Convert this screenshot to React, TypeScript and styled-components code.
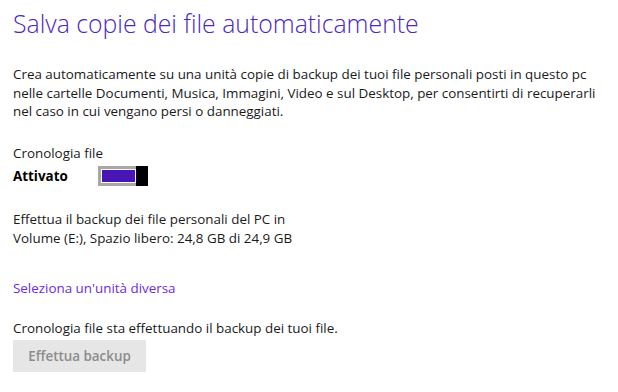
import React from "react";
import styled, { createGlobalStyle } from "styled-components";

const Global = createGlobalStyle`
  html, body { margin: 0; padding: 0; background: #ffffff; }
  body { font-family: "Open Sans", "Noto Sans", sans-serif; color: #000; }
`;

const Page = styled.main`
  width: 618px;
  height: 392px;
  box-sizing: border-box;
  padding: 7px 0 0 13px;
  overflow: hidden;
  background: #fff;
`;

const Title = styled.h1`
  margin: 0;
  font-family: "Open Sans", sans-serif;
  font-weight: 300;
  font-size: 24.8px;
  line-height: 32px;
  color: #4b28c0;
`;

const Text = styled.p<{ $mt?: number }>`
  margin: ${(p) => p.$mt ?? 0}px 0 0 0;
  font-size: 13.4px;
  line-height: 18.5px;
  color: #1a1a1a;
`;

const ToggleRow = styled.div`
  display: flex;
  align-items: center;
  margin-top: 2px;
  height: 24px;
`;

const ToggleLabel = styled.span`
  font-weight: 700;
  font-size: 13.4px;
  width: 85px;
`;

const Switch = styled.div`
  display: flex;
  height: 20px;
`;

const Track = styled.div`
  width: 38px;
  box-sizing: border-box;
  border: 3px solid #a8a8a8;
  border-right: none;
  padding: 1px;
  background: #fff;
  display: flex;
`;

const Fill = styled.div`
  flex: 1;
  background: #4617b4;
`;

const Thumb = styled.div`
  width: 12px;
  background: #000;
`;

const Link = styled.a`
  display: block;
  margin-top: 32px;
  font-size: 13.4px;
  line-height: 18.5px;
  color: #6a2be0;
  text-decoration: none;
`;

const Button = styled.button`
  margin-top: 3px;
  width: 133px;
  height: 32px;
  border: none;
  background: #e6e6e6;
  color: #8c8c8c;
  font-family: "Open Sans", sans-serif;
  font-weight: 600;
  font-size: 13.4px;
  padding: 0;
  display: block;
`;

export default function App() {
  return (
    <>
      <Global />
      <Page>
        <Title>Salva copie dei file automaticamente</Title>
        <Text $mt={26}>
          Crea automaticamente su una unità copie di backup dei tuoi file personali posti in questo pc
          <br />
          nelle cartelle Documenti, Musica, Immagini, Video e sul Desktop, per consentirti di recuperarli
          <br />
          nel caso in cui vengano persi o danneggiati.
        </Text>
        <Text $mt={23}>Cronologia file</Text>
        <ToggleRow>
          <ToggleLabel>Attivato</ToggleLabel>
          <Switch role="switch" aria-checked="true">
            <Track>
              <Fill />
            </Track>
            <Thumb />
          </Switch>
        </ToggleRow>
        <Text $mt={22}>
          Effettua il backup dei file personali del PC in
          <br />
          Volume (E:), Spazio libero: 24,8 GB di 24,9 GB
        </Text>
        <Link href="#">Seleziona un'unità diversa</Link>
        <Text $mt={21}>Cronologia file sta effettuando il backup dei tuoi file.</Text>
        <Button disabled>Effettua backup</Button>
      </Page>
    </>
  );
}
